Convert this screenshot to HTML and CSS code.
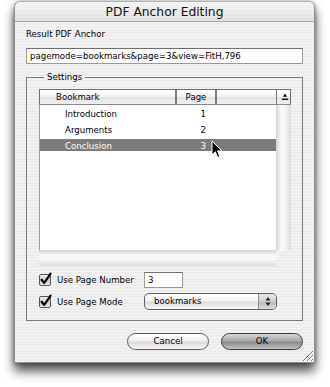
FILE: index.html
```html
<!DOCTYPE html>
<html>
<head>
<meta charset="utf-8">
<link rel="stylesheet" href="styles.css">
</head>
<body>
<div class="win">
  <div class="titlebar">PDF Anchor Editing</div>
  <div class="content">
    <div class="label">Result PDF Anchor</div>
    <div class="field wide">pagemode=bookmarks&amp;page=3&amp;view=FitH,796</div>
    <fieldset class="group">
      <legend>Settings</legend>
      <div class="table">
        <div class="thead">
          <div class="th c1">Bookmark</div>
          <div class="th c2">Page</div>
          <div class="th c3"></div>
          <div class="th c4"><svg width="8" height="8" viewBox="0 0 8 8"><polygon points="4,0.5 6,3.8 2,3.8" fill="#000"/><rect x="0.8" y="5.6" width="6.4" height="1.3" fill="#000"/></svg></div>
        </div>
        <div class="tbody">
          <div class="rows">
            <div class="row"><span class="name">Introduction</span><span class="num">1</span></div>
            <div class="row"><span class="name">Arguments</span><span class="num">2</span></div>
            <div class="row sel"><span class="name">Conclusion</span><span class="num">3</span></div>
          </div>
          <div class="vtrack"></div>
        </div>
        <div class="hrow"><div class="htrack"></div><div class="corner"></div></div>
      </div>
      <div class="opts">
        <svg class="chk" width="13" height="13" viewBox="0 0 13 13"><defs><linearGradient id="cg" x1="0" y1="0" x2="0" y2="1"><stop offset="0" stop-color="#f4f4f4"/><stop offset="0.5" stop-color="#c9c9c9"/><stop offset="1" stop-color="#eeeeee"/></linearGradient></defs><rect x="0.5" y="1.5" width="11" height="11" rx="1.5" fill="url(#cg)" stroke="#555"/><path d="M2.6 6.8 L5.2 10 L11.6 0.6" fill="none" stroke="#000" stroke-width="2.2" stroke-linecap="round" stroke-linejoin="round"/></svg>
        <span class="optlabel">Use Page Number</span>
        <div class="field small">3</div>
        <svg class="chk" width="13" height="13" viewBox="0 0 13 13"><rect x="0.5" y="1.5" width="11" height="11" rx="1.5" fill="url(#cg)" stroke="#555"/><path d="M2.6 6.8 L5.2 10 L11.6 0.6" fill="none" stroke="#000" stroke-width="2.2" stroke-linecap="round" stroke-linejoin="round"/></svg>
        <span class="optlabel">Use Page Mode</span>
        <div class="popup"><span class="ptext">bookmarks</span><span class="parrows"><svg width="6" height="9" viewBox="0 0 6 9"><polygon points="3,0 5.5,3.4 0.5,3.4" fill="#222"/><polygon points="3,9 5.5,5.6 0.5,5.6" fill="#222"/></svg></span></div>
      </div>
    </fieldset>
    <div class="buttons">
      <div class="btn">Cancel</div>
      <div class="btn default">OK</div>
    </div>
  </div>
  <svg class="grip" width="14" height="14" viewBox="0 0 14 14"><path d="M13 3 L3 13 M13 7 L7 13 M13 11 L11 13" stroke="#777" stroke-width="1"/><path d="M13 4 L4 13 M13 8 L8 13" stroke="#fff" stroke-width="1"/></svg>
</div>
<svg class="cursor" width="12" height="19" viewBox="0 0 12 19"><path d="M1 1 L1 15 L4.3 11.8 L6.6 17.4 L8.8 16.4 L6.5 10.9 L11 10.9 Z" fill="#000" stroke="#fff" stroke-width="1" stroke-linejoin="round"/></svg>
</body>
</html>
```
FILE: styles.css
```css
html, body {
  margin: 0;
  padding: 0;
  background: #fff;
}
body {
  width: 330px;
  height: 387px;
  position: relative;
  overflow: hidden;
  font-family: "DejaVu Sans", sans-serif;
  font-size: 8.6px;
  color: #000;
}
.win {
  position: relative;
  margin: 1px 0 0 14px;
  width: 301px;
  box-sizing: border-box;
  border-radius: 6px 6px 0 0;
  border: 1px solid #8e8e8e;
  border-top-color: #b0b0b0;
  background: repeating-linear-gradient(to bottom, #ececec 0px, #ececec 1.5px, #f5f5f5 1.5px, #f5f5f5 3px);
  box-shadow: 0 8px 11px rgba(0,0,0,0.7), 0 0 4px rgba(0,0,0,0.35);
}
.titlebar {
  height: 20px;
  box-sizing: border-box;
  border-bottom: 1px solid #a0a0a0;
  border-radius: 6px 6px 0 0;
  background: repeating-linear-gradient(to bottom, rgba(255,255,255,0.35) 0 1px, rgba(0,0,0,0) 1px 2px), linear-gradient(to bottom, #f2f2f2, #dcdcdc);
  text-align: center;
  font-size: 12.3px;
  line-height: 21px;
  color: #111;
}
.content {
  padding: 7px 11px 12px 11px;
}
.label {
  line-height: 11px;
  height: 11px;
}
.field {
  box-sizing: border-box;
  background: #fff;
  border: 1px solid #9a9a9a;
  border-top-color: #6e6e6e;
  line-height: 14px;
  height: 16px;
  padding-left: 3px;
  white-space: nowrap;
  overflow: hidden;
}
.field.wide {
  margin-top: 8px;
  width: 277px;
}
.field.small {
  width: 39px;
}
.group {
  margin: 8px 0 0 0;
  padding: 7px 11px 10px 12px;
  border: 1px solid #7a7a7a;
  min-width: 0;
  width: 277px;
  box-sizing: border-box;
}
.group legend {
  margin-left: 5px;
  padding: 0 3px;
  line-height: 10px;
}
.table {
  width: 252px;
}
.thead {
  display: grid;
  grid-template-columns: 135px 40px 61px 16px;
  height: 16px;
  box-sizing: border-box;
  border: 1px solid #6e6e6e;
  border-bottom-color: #8a8a8a;
  background: linear-gradient(to bottom, #ffffff, #f2f2f2 50%, #e2e2e2 51%, #f0f0f0);
}
.th {
  line-height: 14px;
  box-sizing: border-box;
}
.th.c1 {
  padding-left: 16px;
}
.th.c2 {
  border-left: 2px solid #7c7c7c;
  text-align: center;
}
.th.c3 {
  border-left: 2px solid #7c7c7c;
}
.th.c4 {
  border-left: 1px solid #7c7c7c;
  display: flex;
  align-items: center;
  justify-content: center;
}
.tbody {
  display: flex;
  height: 145px;
}
.rows {
  width: 237px;
  background: #fff;
  box-sizing: border-box;
  border-left: 1px solid #9a9a9a;
  padding-top: 1px;
}
.row {
  display: grid;
  grid-template-columns: 134px 32px;
  height: 16px;
  line-height: 16px;
}
.row .name {
  padding-left: 25px;
}
.row .num {
  text-align: right;
}
.row.sel {
  background: linear-gradient(to bottom, transparent 1px, #7b7b7b 1px, #7b7b7b 13px, transparent 13px);
  color: #fff;
}
.vtrack {
  width: 15px;
  background: linear-gradient(to right, #d2d2d2, #fbfbfb 35%, #f4f4f4 65%, #dadada);
}
.hrow {
  display: flex;
  height: 16px;
}
.htrack {
  width: 237px;
  background: linear-gradient(to bottom, #d0d0d0, #fbfbfb 35%, #f4f4f4 65%, #dcdcdc);
}
.corner {
  width: 15px;
}
.opts {
  margin-top: 6px;
  display: grid;
  grid-template-columns: 12px 81px auto;
  column-gap: 6px;
  row-gap: 5px;
  align-items: center;
}
.chk {
  overflow: visible;
  margin-top: -1px;
}
.optlabel {
  white-space: nowrap;
}
.popup {
  width: 133px;
  height: 17px;
  box-sizing: border-box;
  border: 1px solid #5e5e5e;
  border-radius: 5px;
  background: linear-gradient(to bottom, #ffffff, #f3f3f3 45%, #dedede 55%, #f6f6f6);
  display: flex;
  align-items: stretch;
}
.ptext {
  flex: 1;
  padding-left: 9px;
  line-height: 14px;
}
.parrows {
  width: 17px;
  border-left: 1px solid #8a8a8a;
  border-radius: 0 4px 4px 0;
  background: linear-gradient(to bottom, #e8e8e8, #cfcfcf 50%, #b8b8b8 51%, #dcdcdc);
  display: flex;
  align-items: center;
  justify-content: center;
}
.buttons {
  margin-top: 12px;
  display: flex;
  justify-content: flex-end;
  gap: 12px;
}
.btn {
  width: 82px;
  height: 17px;
  box-sizing: border-box;
  border: 1px solid #5a5a5a;
  border-radius: 9px;
  text-align: center;
  line-height: 15px;
  background: linear-gradient(to bottom, #ffffff, #f0f0f0 45%, #dcdcdc 55%, #f8f8f8);
}
.btn.default {
  border-color: #3e3e3e;
  background: linear-gradient(to bottom, #d8d8d8, #a8a8a8 45%, #888888 55%, #c4c4c4);
}
.grip {
  position: absolute;
  right: 0;
  bottom: 0;
}
.cursor {
  position: absolute;
  left: 211px;
  top: 140px;
}
```
